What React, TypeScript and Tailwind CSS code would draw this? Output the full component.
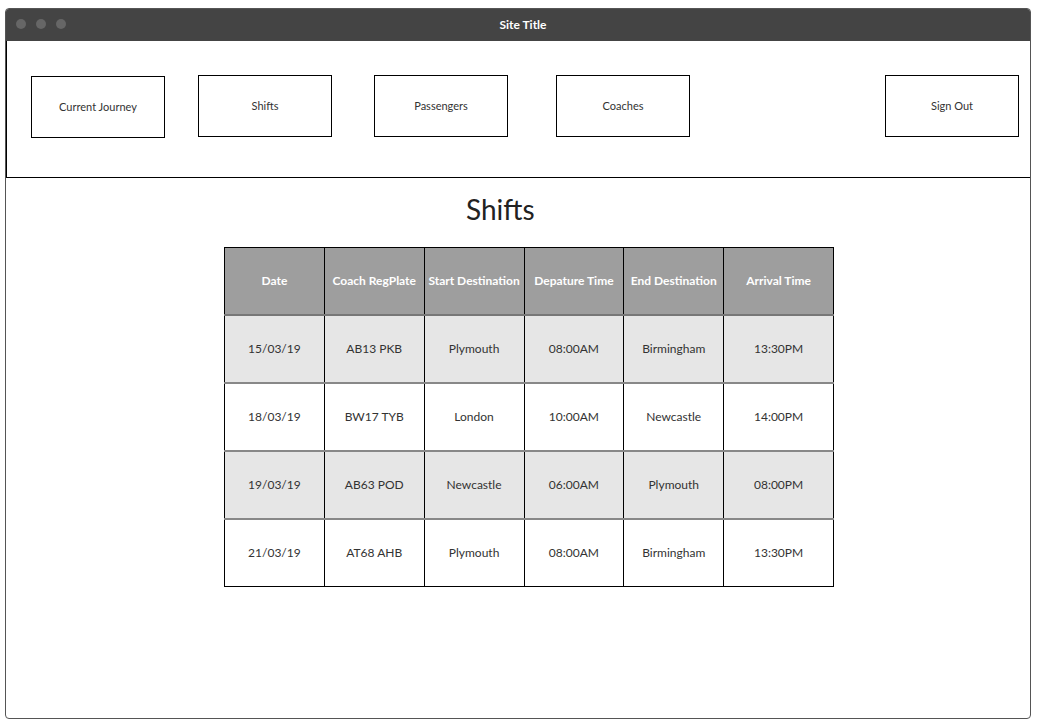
const navItems = [
  { label: "Current Journey", cls: "ml-[24px] mt-[1px]" },
  { label: "Shifts", cls: "ml-[33px]" },
  { label: "Passengers", cls: "ml-[42px]" },
  { label: "Coaches", cls: "ml-[48px]" },
  { label: "Sign Out", cls: "ml-auto mr-[11px]" },
];

const headers = [
  "Date",
  "Coach RegPlate",
  "Start Destination",
  "Depature Time",
  "End Destination",
  "Arrival Time",
];

const shifts = [
  ["15/03/19", "AB13 PKB", "Plymouth", "08:00AM", "Birmingham", "13:30PM"],
  ["18/03/19", "BW17 TYB", "London", "10:00AM", "Newcastle", "14:00PM"],
  ["19/03/19", "AB63 POD", "Newcastle", "06:00AM", "Plymouth", "08:00PM"],
  ["21/03/19", "AT68 AHB", "Plymouth", "08:00AM", "Birmingham", "13:30PM"],
];

const colWidths = ["w-[100px]", "w-[100px]", "w-[100px]", "w-[100px]", "w-[100px]", "w-[110px]"];

export default function App() {
  return (
    <div className="h-[725px] w-[1041px] bg-white pt-[8px] pl-[5px] font-['Lato','Liberation_Sans',sans-serif]">
      <div className="flex h-[711px] w-[1026px] flex-col overflow-hidden rounded-[4px] border border-[#555]">
        {/* title bar */}
        <div className="relative flex h-[32px] shrink-0 items-center justify-center bg-[#444]">
          <div className="absolute left-[10px] top-[10px] flex gap-[10px]">
            <span className="h-[10px] w-[10px] rounded-full bg-[#666]" />
            <span className="h-[10px] w-[10px] rounded-full bg-[#666]" />
            <span className="h-[10px] w-[10px] rounded-full bg-[#666]" />
          </div>
          <span className="pl-[10px] text-[12px] font-bold text-white">Site Title</span>
        </div>

        {/* nav */}
        <div className="flex h-[137px] shrink-0 items-start border-b border-l border-black pt-[34px]">
          {navItems.map((item) => (
            <div
              key={item.label}
              className={`flex h-[62px] w-[134px] items-center justify-center border border-black text-[11px] text-[#333] ${item.cls}`}
            >
              {item.label}
            </div>
          ))}
        </div>

        {/* content */}
        <div className="flex flex-col">
          <h1 className="ml-[460px] mt-[11px] h-[40px] text-[28px] leading-[40px] text-[#222]">Shifts</h1>
          <table className="ml-[218px] mt-[18px] w-[610px] border-collapse border border-black text-[12px]">
            <thead>
              <tr className="h-[67px] bg-[#9e9e9e]">
                {headers.map((h, i) => (
                  <th
                    key={h}
                    className={`${colWidths[i]} border-x border-black border-b-2 border-b-[#777] px-0 text-center font-bold text-white`}
                  >
                    {h}
                  </th>
                ))}
              </tr>
            </thead>
            <tbody>
              {shifts.map((row, r) => (
                <tr key={r} className={`h-[68px] ${r % 2 === 0 ? "bg-[#e6e6e6]" : "bg-white"}`}>
                  {row.map((cell, c) => (
                    <td
                      key={c}
                      className={`border-x border-black ${r < shifts.length - 1 ? "border-b-2 border-b-[#888]" : "border-b border-b-black"} text-center text-[#333]`}
                    >
                      {cell}
                    </td>
                  ))}
                </tr>
              ))}
            </tbody>
          </table>
        </div>
      </div>
    </div>
  );
}
